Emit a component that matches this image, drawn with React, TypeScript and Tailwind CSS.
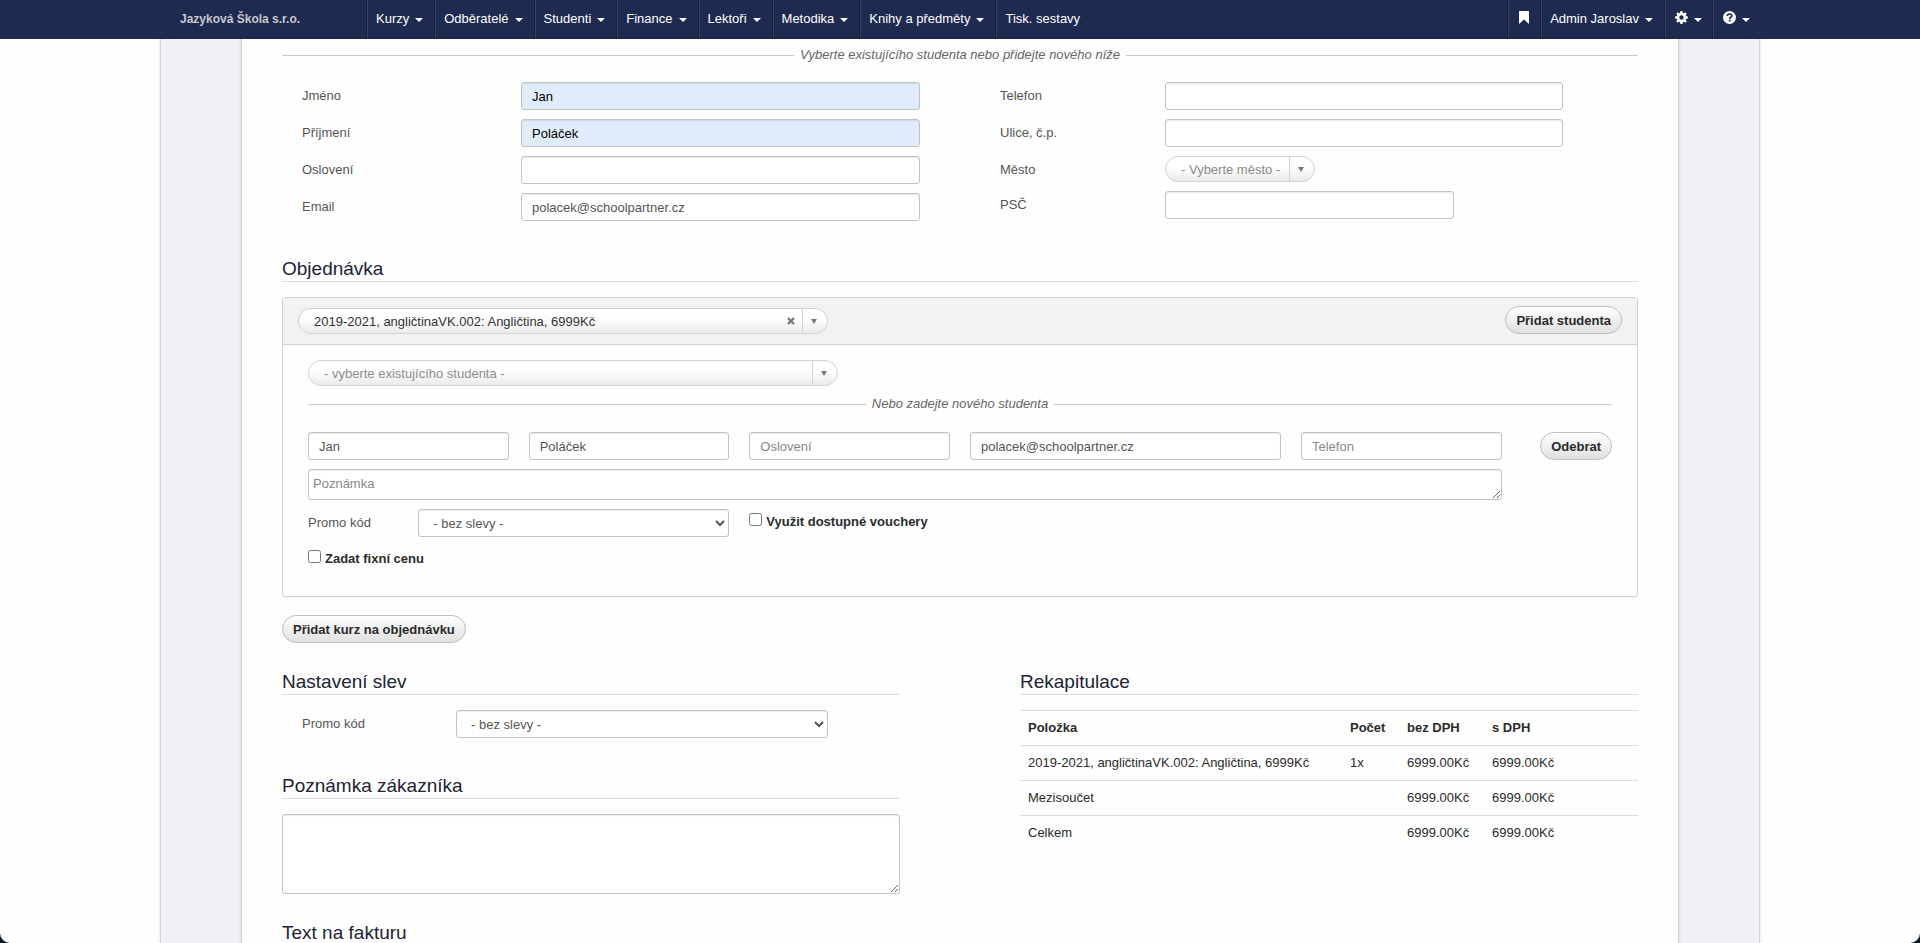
import React from 'react'
import { clsx } from 'clsx'

const NAV_ITEMS = ['Kurzy', 'Odběratelé', 'Studenti', 'Finance', 'Lektoři', 'Metodika', 'Knihy a předměty']

const COURSE = '2019-2021, angličtinaVK.002: Angličtina, 6999Kč'

const SUMMARY_ROWS = [
  { name: COURSE, count: '1x', net: '6999.00Kč', gross: '6999.00Kč' },
  { name: 'Mezisoučet', count: '', net: '6999.00Kč', gross: '6999.00Kč' },
  { name: 'Celkem', count: '', net: '6999.00Kč', gross: '6999.00Kč' },
]

const fieldClass =
  'block w-full rounded-[3px] border border-[#c2c2c2] bg-white text-[13px] text-[#555] shadow-[inset_0_1px_1px_rgba(0,0,0,0.08)] placeholder:text-[#888] focus:outline-none'

const Caret = () => (
  <svg width="8" height="4" viewBox="0 0 8 4" className="ml-1.5 mt-0.5" fill="currentColor">
    <path d="M0 0h8L4 4z" />
  </svg>
)

const BookmarkIcon = () => (
  <svg width="10" height="13" viewBox="0 0 10 13" fill="currentColor">
    <path d="M0 0h10v13L5 8.6 0 13z" />
  </svg>
)

const CogIcon = () => (
  <svg width="13" height="13" viewBox="-6.5 -6.5 13 13" fill="currentColor">
    <circle r="3.5" fill="none" stroke="currentColor" strokeWidth="2.6" />
    {[0, 45, 90, 135, 180, 225, 270, 315].map((angle) => (
      <path key={angle} d="M-1.5 -4.2L-1 -6.4H1L1.5 -4.2z" transform={`rotate(${angle})`} />
    ))}
  </svg>
)

const HelpIcon = () => (
  <svg width="13" height="13" viewBox="0 0 13 13">
    <circle cx="6.5" cy="6.5" r="6.5" fill="currentColor" />
    <path d="M4.3 5.1C4.3 3.7 5.2 3 6.6 3S8.8 3.8 8.8 4.9C8.8 6.3 6.7 6.3 6.7 7.9" fill="none" stroke="#1e2a4f" strokeWidth="1.7" />
    <rect x="5.8" y="8.8" width="1.8" height="1.7" fill="#1e2a4f" />
  </svg>
)

// items with a label hold only an icon and are padded evenly
const NavItem: React.FC<{ label?: string; caret?: boolean; children?: React.ReactNode }> = ({
  label,
  caret = true,
  children,
}) => (
  <li className="border-l border-[#151d38] shadow-[inset_1px_0_0_rgba(255,255,255,0.12)]">
    <a
      href="#"
      aria-label={label}
      className={clsx(
        'flex h-full items-center whitespace-nowrap pb-0.5 text-white',
        label ? 'px-2.5' : 'pl-[9px] pr-[11px]',
      )}
    >
      {children}
      {caret && <Caret />}
    </a>
  </li>
)

const Navbar = () => (
  <nav className="bg-[#1e2a4f] text-[13px]">
    <div className="mx-auto flex h-[39px] max-w-[1600px]">
      <a href="#" className="flex w-[206px] shrink-0 items-center pb-0.5 pl-5 text-xs font-bold text-[#c8c8cc]">
        Jazyková Škola s.r.o.
      </a>
      <ul className="flex">
        {NAV_ITEMS.map((item) => (
          <NavItem key={item}>{item}</NavItem>
        ))}
        <NavItem caret={false}>Tisk. sestavy</NavItem>
      </ul>
      <ul className="ml-auto flex">
        <NavItem label="Záložky" caret={false}>
          <span className="px-px pb-0.5">
            <BookmarkIcon />
          </span>
        </NavItem>
        <NavItem>Admin Jaroslav</NavItem>
        <NavItem label="Nastavení">
          <span className="pb-0.5">
            <CogIcon />
          </span>
        </NavItem>
        <NavItem label="Nápověda">
          <span className="pb-0.5">
            <HelpIcon />
          </span>
        </NavItem>
      </ul>
    </div>
  </nav>
)

const Separator: React.FC<{ children: React.ReactNode; className?: string }> = ({ children, className }) => (
  <div className={clsx('flex items-center gap-1.5 leading-5 italic text-[#666]', className)}>
    <span className="h-px flex-1 bg-[#ccc]" />
    {children}
    <span className="h-px flex-1 bg-[#ccc]" />
  </div>
)

const SectionTitle: React.FC<{ children: React.ReactNode; className?: string }> = ({ children, className }) => (
  <h2 className={clsx('mb-[15px] border-b border-[#ddd] text-[19px] leading-6 text-[#222433]', className)}>
    {children}
  </h2>
)

const TextField: React.FC<React.InputHTMLAttributes<HTMLInputElement>> = ({ className, ...props }) => (
  <input type="text" className={clsx(fieldClass, 'h-7 px-2.5', className)} {...props} />
)

const PromoSelect: React.FC<{ id: string }> = ({ id }) => (
  <select id={id} className={clsx(fieldClass, 'h-7 pl-2.5')}>
    <option>- bez slevy -</option>
  </select>
)

interface PillSelectProps {
  id?: string
  label?: string
  value: string
  clearable?: boolean
  className?: string
}

const PillSelect: React.FC<PillSelectProps> = ({ id, label, value, clearable, className }) => (
  <div
    className={clsx(
      'flex h-[26px] items-stretch overflow-hidden rounded-full border border-[#d3d3d3] bg-linear-to-b from-white from-40% to-[#ebebeb]',
      className,
    )}
  >
    <select
      id={id}
      aria-label={label}
      className={clsx(
        'min-w-0 flex-1 appearance-none pl-[15px] pr-1 pt-px focus:outline-none',
        clearable ? 'text-[#333]' : 'text-[#8c8c8c]',
      )}
    >
      <option>{value}</option>
    </select>
    {clearable && (
      <button type="button" aria-label="Zrušit výběr" className="px-[7px] text-[#777]">
        <svg width="8" height="8" viewBox="0 0 8 8" stroke="currentColor" strokeWidth="2.4">
          <path d="M1 1l6 6M7 1L1 7" />
        </svg>
      </button>
    )}
    <span className="flex w-[25px] items-center justify-center border-l border-[#d3d3d3] pr-0.5 pt-px text-[#777]">
      <svg width="6" height="5" viewBox="0 0 6 5" fill="currentColor">
        <path d="M0 0h6L3 5z" />
      </svg>
    </span>
  </div>
)

const PillButton: React.FC<{ children: React.ReactNode; className?: string }> = ({ children, className }) => (
  <button
    type="button"
    className={clsx(
      'h-7 whitespace-nowrap rounded-full border border-[#bfbfbf] bg-linear-to-b from-white to-[#e0e0e0] px-2.5 pt-px font-bold text-[#2b2b2b]',
      className,
    )}
  >
    {children}
  </button>
)

const Field: React.FC<{ id: string; label: string; wide?: boolean; children: React.ReactNode }> = ({
  id,
  label,
  wide,
  children,
}) => (
  <div className="flex">
    <label htmlFor={id} className={clsx('shrink-0 pt-1 leading-5', wide ? 'w-[219px]' : 'w-[165px]')}>
      {label}
    </label>
    {children}
  </div>
)

const CustomerForm = () => (
  <div className="mt-[17px] grid grid-cols-2 gap-5">
    <div className="flex flex-col gap-[9px] pl-5">
      <Field id="first-name" label="Jméno" wide>
        <TextField id="first-name" defaultValue="Jan" className="max-w-[399px] bg-[#e1ecfb]! text-black!" />
      </Field>
      <Field id="last-name" label="Příjmení" wide>
        <TextField id="last-name" defaultValue="Poláček" className="max-w-[399px] bg-[#e1ecfb]! text-black!" />
      </Field>
      <Field id="salutation" label="Oslovení" wide>
        <TextField id="salutation" className="max-w-[399px]" />
      </Field>
      <Field id="email" label="Email" wide>
        <TextField id="email" defaultValue="polacek@schoolpartner.cz" className="max-w-[399px]" />
      </Field>
    </div>
    <div className="flex flex-col gap-[9px] pl-[30px]">
      <Field id="phone" label="Telefon">
        <TextField id="phone" className="max-w-[398px]" />
      </Field>
      <Field id="street" label="Ulice, č.p.">
        <TextField id="street" className="max-w-[398px]" />
      </Field>
      <Field id="city" label="Město">
        <PillSelect id="city" value="- Vyberte město -" className="w-[150px]" />
      </Field>
      <Field id="zip" label="PSČ">
        <TextField id="zip" className="max-w-[289px]" />
      </Field>
    </div>
  </div>
)

const OrderPanel = () => (
  <div className="rounded-[3px] border border-[#d3d3d3] shadow-[0_1px_1px_rgba(0,0,0,0.05)]">
    <div className="flex items-end justify-between border-b border-[#d3d3d3] bg-[#f2f2f2] px-[15px] pt-2 pb-2.5">
      <PillSelect label="Kurz" value={COURSE} clearable className="w-[530px]" />
      <PillButton>Přidat studenta</PillButton>
    </div>
    <div className="px-[25px] pt-[15px] pb-[27px]">
      <PillSelect label="Student" value="- vyberte existujícího studenta -" className="w-[530px]" />
      <Separator className="mt-2">Nebo zadejte nového studenta</Separator>
      <div className="mt-[18px] grid grid-cols-12 gap-x-5 gap-y-[9px]">
        <div className="col-span-2">
          <TextField aria-label="Jméno" defaultValue="Jan" />
        </div>
        <div className="col-span-2">
          <TextField aria-label="Příjmení" defaultValue="Poláček" />
        </div>
        <div className="col-span-2">
          <TextField aria-label="Oslovení" placeholder="Oslovení" />
        </div>
        <div className="col-span-3">
          <TextField aria-label="Email" defaultValue="polacek@schoolpartner.cz" />
        </div>
        <div className="col-span-2">
          <TextField aria-label="Telefon" placeholder="Telefon" />
        </div>
        <PillButton className="justify-self-end">Odebrat</PillButton>

        <textarea
          aria-label="Poznámka"
          placeholder="Poznámka"
          className={clsx(fieldClass, 'col-span-11 h-[31px] px-1 py-1 leading-5')}
        />

        <label htmlFor="student-promo" className="col-start-1 pt-1 leading-5">
          Promo kód
        </label>
        <div className="col-span-3">
          <PromoSelect id="student-promo" />
        </div>
        <label className="col-span-4 flex items-baseline gap-1 pt-[3px] leading-5 font-bold text-[#2b2b2b]">
          <input type="checkbox" className="size-[13px]" />
          Využit dostupné vouchery
        </label>
      </div>
      <label className="mt-3 flex items-baseline gap-1 leading-5 font-bold text-[#2b2b2b]">
        <input type="checkbox" className="size-[13px]" />
        Zadat fixní cenu
      </label>
    </div>
  </div>
)

const Summary = () => (
  <table className="w-full border-collapse text-left text-[#2b2b2b]">
    <thead>
      <tr className="h-[35px] border-t border-[#ddd]">
        <th className="px-2">Položka</th>
        <th className="w-[57px] px-2">Počet</th>
        <th className="w-[85px] px-2">bez DPH</th>
        <th className="w-[154px] px-2">s DPH</th>
      </tr>
    </thead>
    <tbody>
      {SUMMARY_ROWS.map((row) => (
        <tr key={row.name} className="h-[35px] border-t border-[#ddd]">
          <td className="px-2">{row.name}</td>
          <td className="px-2">{row.count}</td>
          <td className="px-2">{row.net}</td>
          <td className="px-2">{row.gross}</td>
        </tr>
      ))}
    </tbody>
  </table>
)

const App: React.FC = () => {
  return (
    <div className="h-screen overflow-hidden bg-[#0b1424] font-['Liberation_Sans',Arial,sans-serif] text-[13px] leading-5 text-[#555]">
      <div className="flex h-full flex-col overflow-hidden rounded-b-[10px] bg-[#fefefe]">
        <Navbar />
        <div className="mx-auto min-h-0 w-full max-w-[1600px] flex-1 border-x border-[#d3d3d6] bg-[#f0f0f5] px-20 shadow-[0_0_3px_rgba(0,0,0,0.12)]">
          <main className="h-full overflow-hidden border-x border-[#d3d3d6] bg-[#fefefe] px-10 pt-1.5 shadow-[0_0_3px_rgba(0,0,0,0.12)]">
            <Separator>Vyberte existujícího studenta nebo přidejte nového níže</Separator>
            <CustomerForm />

            <SectionTitle className="mt-9">Objednávka</SectionTitle>
            <OrderPanel />
            <PillButton className="mt-[18px]">Přidat kurz na objednávku</PillButton>

            <div className="mt-[27px] grid grid-cols-2 gap-[120px]">
              <section>
                <SectionTitle>Nastavení slev</SectionTitle>
                <div className="flex pl-5">
                  <label htmlFor="order-promo" className="w-[154px] shrink-0 pt-1 leading-5">
                    Promo kód
                  </label>
                  <div className="w-full max-w-[372px]">
                    <PromoSelect id="order-promo" />
                  </div>
                </div>

                <SectionTitle className="mt-9">Poznámka zákazníka</SectionTitle>
                <textarea aria-label="Poznámka zákazníka" className={clsx(fieldClass, 'h-20 px-1 py-1')} />

                <SectionTitle className="mt-[27px]">Text na fakturu</SectionTitle>
              </section>
              <section>
                <SectionTitle>Rekapitulace</SectionTitle>
                <Summary />
              </section>
            </div>
          </main>
        </div>
      </div>
    </div>
  )
}

export default App
